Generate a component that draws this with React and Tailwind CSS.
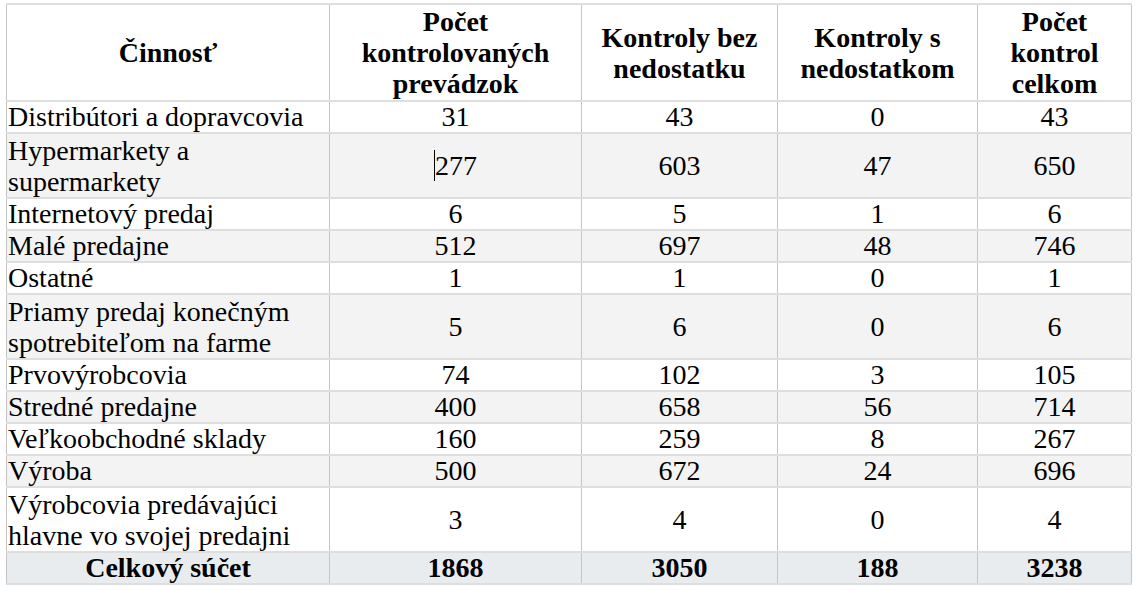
import React from "react"

const rows = [
    { name: ["Distribútori a dopravcovia"], v: [31, 43, 0, 43] },
    { name: ["Hypermarkety a", "supermarkety"], v: [277, 603, 47, 650], caret: true },
    { name: ["Internetový predaj"], v: [6, 5, 1, 6] },
    { name: ["Malé predajne"], v: [512, 697, 48, 746] },
    { name: ["Ostatné"], v: [1, 1, 0, 1] },
    { name: ["Priamy predaj konečným", "spotrebiteľom na farme"], v: [5, 6, 0, 6] },
    { name: ["Prvovýrobcovia"], v: [74, 102, 3, 105] },
    { name: ["Stredné predajne"], v: [400, 658, 56, 714] },
    { name: ["Veľkoobchodné sklady"], v: [160, 259, 8, 267] },
    { name: ["Výroba"], v: [500, 672, 24, 696] },
    { name: ["Výrobcovia predávajúci", "hlavne vo svojej predajni"], v: [3, 4, 0, 4] },
]

const cell = "border-x border-x-[#c4c4c4] border-y-2 border-y-[#dedede] p-0 font-['Liberation_Serif'] text-[28px]"

const App = () => {
    return (
        <div className="w-[1137px] h-[590px] bg-white pl-[6px] pt-[3px] font-['Liberation_Serif'] text-[28px] leading-[32px] text-black">
            <table className="border-collapse table-fixed w-[1125px] font-['Liberation_Serif'] text-[28px]">
                <colgroup>
                    <col className="w-[323px]" />
                    <col className="w-[252px]" />
                    <col className="w-[196px]" />
                    <col className="w-[200px]" />
                    <col className="w-[154px]" />
                </colgroup>
                <thead>
                    <tr className="h-[97px] font-bold text-center leading-[31px]">
                        <th className={cell}>Činnosť</th>
                        <th className={cell}>Počet<br />kontrolovaných<br />prevádzok</th>
                        <th className={cell}>Kontroly bez<br />nedostatku</th>
                        <th className={cell}>Kontroly s<br />nedostatkom</th>
                        <th className={cell}>Počet<br />kontrol<br />celkom</th>
                    </tr>
                </thead>
                <tbody>
                    {rows.map((r, i) => (
                        <tr key={i} className={(i % 2 === 1 ? "bg-[#f3f3f3] " : "bg-white ") + (r.name.length > 1 ? "h-[65px]" : "h-[30px]")}>
                            <td className={cell + " pl-[1px] text-left whitespace-nowrap"}>
                                {r.name.map((n, j) => (
                                    <div key={j} className={r.name.length > 1 ? "leading-[31px]" : "leading-[30px]"}>{n}</div>
                                ))}
                            </td>
                            {r.v.map((x, j) => (
                                <td key={j} className={cell + " text-center leading-[30px]"}>
                                    {r.caret && j === 0 ? (
                                        <span className="border-l border-black">{x}</span>
                                    ) : x}
                                </td>
                            ))}
                        </tr>
                    ))}
                    <tr className="h-[30px] bg-[#e9ecef] font-bold text-center leading-[30px]">
                        <td className={cell + " font-bold"}>Celkový súčet</td>
                        <td className={cell + " font-bold"}>1868</td>
                        <td className={cell + " font-bold"}>3050</td>
                        <td className={cell + " font-bold"}>188</td>
                        <td className={cell + " font-bold"}>3238</td>
                    </tr>
                </tbody>
            </table>
        </div>
    )
}

export default App
